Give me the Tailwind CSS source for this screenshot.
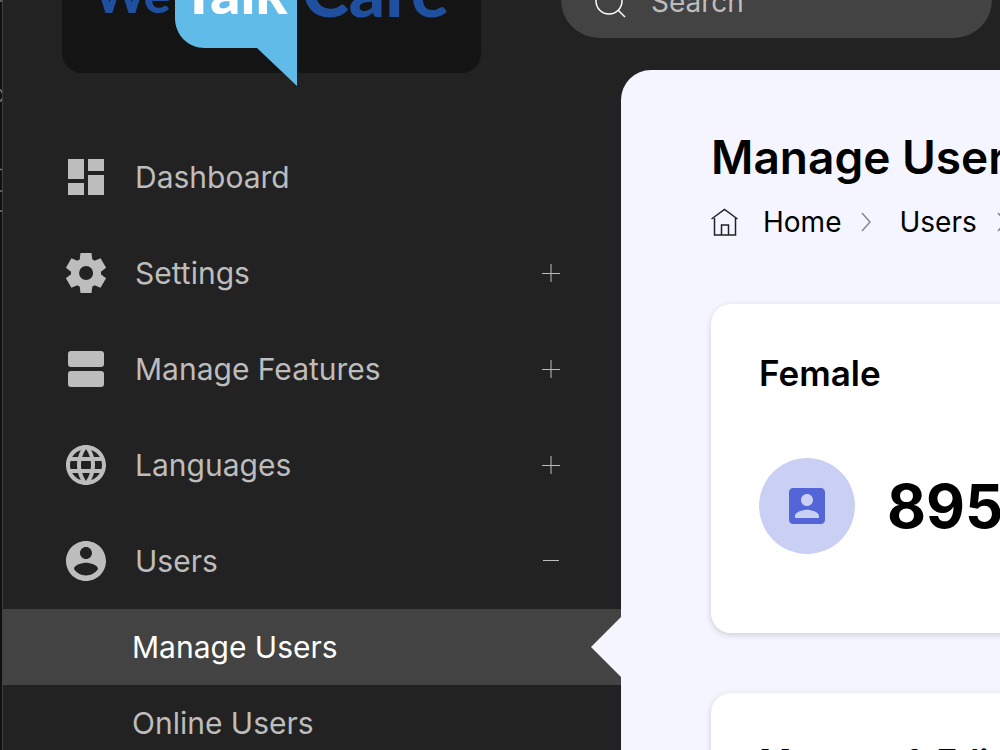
<!DOCTYPE html>
<html lang="en">
<head>
  <meta charset="UTF-8" />
  <meta name="viewport" content="width=device-width, initial-scale=1.0"/>
  <script src="https://cdn.jsdelivr.net/npm/@tailwindcss/browser@4"></script>
  <title>Manage Users</title>
</head>
<body class="flex h-screen overflow-hidden bg-[#222222] font-['Inter',sans-serif] text-black">
  <!-- Window edge -->
  <svg class="h-[750px] w-[2px] shrink-0 bg-[#111111]" viewBox="0 0 2 750" fill="none" stroke="#777777" stroke-width="1.5" aria-hidden="true">
    <path d="M0 1h2M0 89.5q1.5 1 2 3.5M0 101.5q1.5-1 2-3M0 169.5h2M0 191h2M0 211h2" />
  </svg>

  <div class="flex min-w-0 flex-1 flex-col border-l border-[#3f3f3f]">
    <!-- Header -->
    <header class="relative z-10 -mt-20 flex h-[150px] shrink-0 items-start gap-20 pl-[59px]">
      <a href="#" aria-label="WeTalkCare" class="h-[153px] w-[419px] shrink-0 rounded-[20px] bg-[#141414]">
        <svg class="h-[153px] w-[419px] overflow-visible font-['Lato',sans-serif] font-black" viewBox="0 0 419 153">
          <text x="32" y="93" font-size="50" fill="#1f4f9f">We</text>
          <path d="M113 40h122v126l-40-38h-52c-17 0-30-13-30-30z" fill="#60bbe9" />
          <text x="119" y="94" font-size="59" fill="#ffffff">Talk</text>
          <text x="240" y="97" font-size="71" fill="#1f4f9f">Care</text>
        </svg>
      </a>
      <label class="mt-[42px] flex h-[76px] w-[431px] shrink-0 items-center gap-6 rounded-full bg-[#434343] pt-1 pl-[30px]">
        <svg class="h-9 w-9 shrink-0" viewBox="0 0 36 36" fill="none" stroke="#ffffff" stroke-width="1.5" aria-hidden="true">
          <circle cx="18" cy="17" r="13" />
          <path d="M27 26l7 7" />
        </svg>
        <input type="search" aria-label="Search" placeholder="Search" class="w-full min-w-0 bg-transparent text-[28px] leading-10 outline-none placeholder:text-[#bdbdbd]" />
      </label>
    </header>

    <div class="flex min-h-0 flex-1">
      <!-- Sidebar -->
      <nav class="w-[618px] shrink-0 pt-[59px] text-[30px] leading-9 text-[#bdbdbd]">
        <a href="#" class="flex h-24 items-center gap-[25px] pr-[60px] pl-[59px]">
          <svg class="h-12 w-12" viewBox="0 0 24 24" fill="currentColor" aria-hidden="true"><path d="M3 13h8V3H3v10zm0 8h8v-6H3v6zm10 0h8V11h-8v10zm0-18v6h8V3h-8z" /></svg>
          <span class="flex-1">Dashboard</span>
        </a>
        <button class="flex h-24 w-full items-center gap-[25px] pr-[60px] pl-[59px] text-left">
          <svg class="h-12 w-12" viewBox="0 0 24 24" fill="currentColor" aria-hidden="true"><path d="m9.25 22-.4-3.2q-.325-.125-.612-.3-.288-.175-.563-.375L4.7 19.375l-2.75-4.75 2.575-1.95Q4.5 12.5 4.5 12.337v-.675q0-.162.025-.337L1.95 9.375l2.75-4.75 2.975 1.25q.275-.2.575-.375.3-.175.6-.3l.4-3.2h5.5l.4 3.2q.325.125.613.3.287.175.562.375l2.975-1.25 2.75 4.75-2.575 1.95q.025.175.025.337v.675q0 .163-.05.338l2.575 1.95-2.75 4.75-2.95-1.25q-.275.2-.575.375-.3.175-.6.3l-.4 3.2Zm2.8-6.5q1.45 0 2.475-1.025Q15.55 13.45 15.55 12q0-1.45-1.025-2.475Q13.5 8.5 12.05 8.5q-1.475 0-2.488 1.025Q8.55 10.55 8.55 12q0 1.45 1.012 2.475Q10.575 15.5 12.05 15.5Z" /></svg>
          <span class="flex-1">Settings</span>
          <svg class="h-5 w-5" viewBox="0 0 20 20" stroke="currentColor" aria-hidden="true"><path d="M1 10.5h18M10 1v18" /></svg>
        </button>
        <button class="flex h-24 w-full items-center gap-[25px] pr-[60px] pl-[59px] text-left">
          <svg class="h-12 w-12" viewBox="0 0 24 24" fill="currentColor" aria-hidden="true"><rect x="3" y="3" width="18" height="8" rx="1.5" /><rect x="3" y="13" width="18" height="8" rx="1.5" /></svg>
          <span class="flex-1">Manage Features</span>
          <svg class="h-5 w-5" viewBox="0 0 20 20" stroke="currentColor" aria-hidden="true"><path d="M1 10.5h18M10 1v18" /></svg>
        </button>
        <button class="flex h-24 w-full items-center gap-[25px] pr-[60px] pl-[59px] text-left">
          <svg class="h-12 w-12" viewBox="0 0 24 24" fill="currentColor" aria-hidden="true"><path d="M11.99 2C6.47 2 2 6.48 2 12s4.47 10 9.99 10C17.52 22 22 17.52 22 12S17.52 2 11.99 2zm6.93 6h-2.95c-.32-1.25-.78-2.45-1.38-3.56 1.84.63 3.37 1.91 4.33 3.56zM12 4.04c.83 1.2 1.48 2.53 1.91 3.96h-3.82c.43-1.43 1.08-2.76 1.91-3.96zM4.26 14C4.1 13.36 4 12.69 4 12s.1-1.36.26-2h3.38c-.08.66-.14 1.32-.14 2 0 .68.06 1.34.14 2H4.26zm.82 2h2.95c.32 1.25.78 2.45 1.38 3.56-1.84-.63-3.37-1.9-4.33-3.56zm2.95-8H5.08c.96-1.66 2.49-2.93 4.33-3.56C8.81 5.55 8.35 6.75 8.03 8zM12 19.96c-.83-1.2-1.48-2.53-1.91-3.96h3.82c-.43 1.43-1.08 2.76-1.91 3.96zM14.34 14H9.66c-.09-.66-.16-1.32-.16-2 0-.68.07-1.35.16-2h4.68c.09.65.16 1.32.16 2 0 .68-.07 1.34-.16 2zm.25 5.56c.6-1.11 1.06-2.31 1.38-3.56h2.95c-.96 1.65-2.49 2.93-4.33 3.56zM16.36 14c.08-.66.14-1.32.14-2 0-.68-.06-1.34-.14-2h3.38c.16.64.26 1.31.26 2s-.1 1.36-.26 2h-3.38z" /></svg>
          <span class="flex-1">Languages</span>
          <svg class="h-5 w-5" viewBox="0 0 20 20" stroke="currentColor" aria-hidden="true"><path d="M1 10.5h18M10 1v18" /></svg>
        </button>
        <button class="flex h-24 w-full items-center gap-[25px] pr-[60px] pl-[59px] text-left" aria-expanded="true">
          <svg class="h-12 w-12" viewBox="0 0 24 24" fill="currentColor" aria-hidden="true"><path d="M12 2C6.48 2 2 6.48 2 12s4.48 10 10 10 10-4.48 10-10S17.52 2 12 2zm0 3c1.66 0 3 1.34 3 3s-1.34 3-3 3-3-1.34-3-3 1.34-3 3-3zm0 14.2c-2.5 0-4.71-1.28-6-3.22.03-1.99 4-3.08 6-3.08 1.99 0 5.97 1.09 6 3.08-1.29 1.94-3.5 3.22-6 3.22z" /></svg>
          <span class="flex-1">Users</span>
          <svg class="h-5 w-5" viewBox="0 0 20 20" stroke="currentColor" aria-hidden="true"><path d="M2 9.5h16" /></svg>
        </button>
        <ul>
          <li>
            <a href="#" aria-current="page" class="flex h-[76px] items-center justify-between bg-[#434343] pl-[129px] text-white">
              Manage Users
              <svg class="h-[60px] w-[30px]" viewBox="0 0 30 60" aria-hidden="true"><path d="M30 0v60L0 30z" fill="#f5f5ff" /></svg>
            </a>
          </li>
          <li><a href="#" class="flex h-[76px] items-center pl-[129px]">Online Users</a></li>
        </ul>
      </nav>

      <!-- Content -->
      <main class="min-w-0 flex-1 overflow-hidden rounded-tl-[30px] bg-[#f5f5ff] pt-[59px] pl-[90px]">
        <div class="min-w-[640px]">
          <h1 class="text-[46px] leading-[56px] font-semibold">Manage Users</h1>
          <nav class="mt-[17px] flex h-10 items-center text-[28px] leading-10" aria-label="Breadcrumb">
            <a href="#" class="flex items-center gap-6">
              <svg class="h-7 w-7" viewBox="0 0 28 28" fill="none" stroke="#222222" stroke-width="1.5" aria-hidden="true"><path d="M.5 11 13.5 1.5 26.5 11M3.5 10v17h21V10M10.5 27V17h7v10" /></svg>
              Home
            </a>
            <svg class="mx-5 h-5 w-3" viewBox="0 0 12 20" fill="none" stroke="#888888" stroke-width="1.5" aria-hidden="true"><path d="M1 1l8 9-8 9" /></svg>
            <a href="#" class="ml-[6px]">Users</a>
            <svg class="mx-5 h-5 w-3" viewBox="0 0 12 20" fill="none" stroke="#888888" stroke-width="1.5" aria-hidden="true"><path d="M1 1l8 9-8 9" /></svg>
            <span class="ml-[6px]">Manage Users</span>
          </nav>

          <section class="mt-[62px] h-[329px] rounded-[20px] bg-white px-12 pt-12 shadow-[0_2px_6px_rgba(0,0,0,0.16)]">
            <h2 class="text-[35px] leading-[42px] font-semibold">Female</h2>
            <div class="mt-16 flex items-center gap-8">
              <span class="flex h-24 w-24 items-center justify-center rounded-full bg-[#cad0f4]">
                <svg class="h-12 w-12" viewBox="0 0 24 24" fill="#5465d8" aria-hidden="true"><path d="M3 5v14c0 1.1.89 2 2 2h14c1.1 0 2-.9 2-2V5c0-1.1-.9-2-2-2H5c-1.11 0-2 .9-2 2zm12 4c0 1.66-1.34 3-3 3s-3-1.34-3-3 1.34-3 3-3 3 1.34 3 3zm-9 8c0-2 4-3.1 6-3.1s6 1.1 6 3.1v1H6v-1z" /></svg>
              </span>
              <span class="text-[60px] leading-[72px] font-bold">895</span>
            </div>
          </section>

          <section class="mt-[60px] h-[329px] rounded-[20px] bg-white px-12 pt-12 shadow-[0_2px_6px_rgba(0,0,0,0.16)]">
            <h2 class="text-[35px] leading-[42px] font-semibold">Manage &amp; Edit</h2>
          </section>
        </div>
      </main>
    </div>
  </div>
</body>
</html>
